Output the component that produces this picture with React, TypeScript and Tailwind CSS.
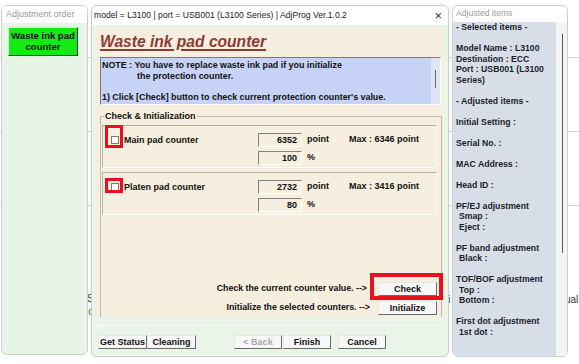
import type { ReactNode } from 'react';

const adjustedLines = [
  '- Selected items -',
  '',
  'Model Name : L3100',
  'Destination : ECC',
  'Port : USB001 (L3100',
  'Series)',
  '',
  '- Adjusted items -',
  '',
  'Initial Setting :',
  '',
  'Serial No. :',
  '',
  'MAC Address :',
  '',
  'Head ID :',
  '',
  'PF/EJ adjustment',
  ' Smap :',
  ' Eject :',
  '',
  'PF band adjustment',
  ' Black :',
  '',
  'TOF/BOF adjustment',
  ' Top :',
  ' Bottom :',
  '',
  'First dot adjustment',
  ' 1st dot :',
];

function Btn({ children, className = '', disabled = false }: { children: ReactNode; className?: string; disabled?: boolean }) {
  return (
    <div
      className={`flex items-center justify-center h-[14px] border border-t-[#e8e8e8] border-l-[#e8e8e8] border-b-[#6a6a6a] border-r-[#6a6a6a] bg-[#f7f7f7] text-[9px] font-bold leading-none ${
        disabled ? 'text-[#a8a8a8]' : 'text-[#111]'
      } ${className}`}
    >
      {children}
    </div>
  );
}

function ValueBox({ value }: { value: string }) {
  return (
    <div className="w-[44px] h-[14px] border border-t-[#808080] border-l-[#808080] border-b-white border-r-white text-right pr-[4px] text-[9px] font-bold leading-[12px]">
      {value}
    </div>
  );
}

function CounterBox({ label, value, pct, max }: { label: string; value: string; pct: string; max: string }) {
  return (
    <div className="mr-[4px] h-[43px] border border-t-[#b9b3a6] border-l-[#b9b3a6] border-b-white border-r-white pl-[8px] pt-[6px] flex flex-col gap-[3px] text-[9px] font-bold">
      <div className="flex items-center">
        <div className="w-[8px] h-[8px] bg-white border border-[#7a7a7a]" />
        <div className="ml-[5px] w-[134px] pt-[2px]">{label}</div>
        <ValueBox value={value} />
        <div className="ml-[5px] w-[42px]">point</div>
        <div>{max}</div>
      </div>
      <div className="flex items-center">
        <div className="w-[147px]" />
        <ValueBox value={pct} />
        <div className="ml-[5px]">%</div>
      </div>
    </div>
  );
}

export default function App() {
  return (
    <div className="relative w-[579px] h-[364px] overflow-hidden bg-white font-['Liberation_Sans',Arial,sans-serif] text-[#111]">
      {/* program behind the windows */}
      <div className="absolute left-0 right-0 top-[57px] h-px bg-[#d4d4d4]" />
      <div className="absolute left-0 right-0 top-[131px] h-px bg-[#d4d4d4]" />
      <div className="absolute left-0 right-0 top-[205px] h-px bg-[#d4d4d4]" />
      <div className="absolute left-[87px] top-[291px] text-[10px] text-[#333]">S</div>
      <div className="absolute left-[86px] top-[304px] text-[10px] text-[#a0402c]">ic</div>
      <div className="absolute left-[448px] top-[292px] text-[10px] text-[#333]">i</div>
      <div className="absolute left-[565px] top-[292px] text-[10px] text-[#333]">ual</div>

      {/* left window */}
      <div className="absolute left-[1px] top-[5px] w-[87px] h-[350px] rounded-[6px] border border-[#cfcfcf] bg-[#e7f5e6] overflow-hidden flex flex-col">
        <div className="h-[17px] bg-white pl-[4px] text-[9px] leading-[16px] text-[#9a9a9a]">Adjustment order</div>
        <div className="ml-[6px] mt-[4px] w-[70px] h-[29px] bg-[#14ea14] border border-t-[#d0ffd0] border-l-[#d0ffd0] border-b-[#3a3a3a] border-r-[#3a3a3a] text-center text-[9.5px] font-bold leading-[11px] pt-[2px]">
          Waste ink pad
          <br />
          counter
        </div>
      </div>

      {/* main window */}
      <div className="absolute left-[91px] top-[5px] w-[358px] h-[352px] rounded-[6px] border border-[#cfcfcf] bg-[#e8f5e7] overflow-hidden flex flex-col shadow-[0_0_4px_rgba(0,0,0,0.08)]">
        <div className="h-[19px] bg-white flex items-center pl-[2px] pr-[6px] text-[8.6px] text-[#222] shrink-0">
          <span className="flex-1 whitespace-nowrap">model = L3100 | port = USB001 (L3100 Series) | AdjProg Ver.1.0.2</span>
          <span className="text-[13px] leading-none text-[#333]">×</span>
        </div>

        <div className="ml-[4px] mt-[3px] w-[348px] h-[289px] bg-[#f6eedf] flex flex-col">
          <div className="h-[28px] pl-[4px] flex items-center">
            <span className="text-[15.6px] font-bold italic text-[#8e3b35] underline decoration-2 underline-offset-[2px] leading-none">
              Waste ink pad counter
            </span>
          </div>

          <div className="relative ml-[4px] mr-[3px] mt-[1px] h-[48px] bg-[#c6d3f7] border border-t-[#7a7a7a] border-l-[#7a7a7a] border-b-white border-r-white text-[8.9px] font-bold leading-[10.7px] pl-[1px] pt-[2px]">
            <div className="whitespace-nowrap">NOTE : You have to replace waste ink pad if you initialize</div>
            <div className="whitespace-nowrap pl-[35px]">the protection counter.</div>
            <div className="h-[10.7px]" />
            <div className="whitespace-nowrap">1) Click [Check] button to check current protection counter's value.</div>
            <div className="absolute right-0 top-0 bottom-0 w-[9px] bg-[#dfe5f8]">
              <div className="absolute left-[4px] top-[12px] h-[18px] w-px bg-[#6a6a6a]" />
            </div>
          </div>

          <div className="relative ml-[4px] mr-[2px] mt-[11px] flex-1 border border-[#c4bdae] border-b-0 pl-[1px] pt-[8px] flex flex-col">
            <div className="absolute left-[3px] top-[-7px] bg-[#f6eedf] px-[1px] text-[9px] font-bold leading-[12px]">Check &amp; Initialization</div>
            <CounterBox label="Main pad counter" value="6352" pct="100" max="Max : 6346 point" />
            <div className="h-[4px]" />
            <CounterBox label="Platen pad counter" value="2732" pct="80" max="Max : 3416 point" />

            <div className="flex-1" />
            <div className="flex flex-col items-end gap-[5px] pr-[4px] pb-[2px] text-[8.8px] font-bold">
              <div className="flex items-center">
                <span className="mr-[11px]">Check the current counter value. --&gt;</span>
                <Btn className="w-[59px]">Check</Btn>
              </div>
              <div className="flex items-center">
                <span className="mr-[8px]">Initialize the selected counters. --&gt;</span>
                <Btn className="w-[59px]">Initialize</Btn>
              </div>
            </div>

            {/* red highlight marks */}
            <div className="absolute left-[4px] top-[8px] w-[18px] h-[23px] border-[3px] border-[#e8101c]" />
            <div className="absolute left-[4px] top-[61px] w-[18px] h-[15px] border-[3px] border-[#e8101c]" />
            <div className="absolute left-[269px] top-[156px] w-[73px] h-[27px] border-[4px] border-[#e8101c]" />
          </div>
        </div>

        <div className="mx-[6px] mt-[8px] h-px bg-[#c8cfc8] border-b border-white" />

        <div className="flex items-center ml-[6px] mt-[9px]">
          <Btn className="w-[49px]">Get Status</Btn>
          <Btn className="w-[49px]">Cleaning</Btn>
          <Btn className="w-[48px] ml-[38px]" disabled>
            &lt; Back
          </Btn>
          <Btn className="w-[48px] ml-[1px]">Finish</Btn>
          <Btn className="w-[48px] ml-[7px]">Cancel</Btn>
        </div>
      </div>

      {/* right window */}
      <div className="absolute left-[452px] top-[5px] w-[116px] h-[352px] rounded-[6px] border border-[#cfcfcf] bg-white overflow-hidden flex flex-col">
        <div className="h-[16px] pl-[3px] text-[8.6px] leading-[15px] text-[#9a9a9a]">Adjusted items</div>
        <div className="relative flex-1 flex">
          <div className="w-[103px] bg-[#d7dee8] pl-[3px] text-[8.7px] font-bold leading-[10.5px] text-[#1b1d2b]">
            {adjustedLines.map((line, i) => (
              <div key={i} className={`whitespace-nowrap h-[10.5px] ${line.startsWith(' ') ? 'pl-[3px]' : ''}`}>
                {line.trim()}
              </div>
            ))}
          </div>
          <div className="relative flex-1 bg-[#f3f4f6]">
            <div className="absolute left-[6px] top-[12px] h-[219px] w-px bg-[#555]" />
          </div>
        </div>
      </div>
    </div>
  );
}
